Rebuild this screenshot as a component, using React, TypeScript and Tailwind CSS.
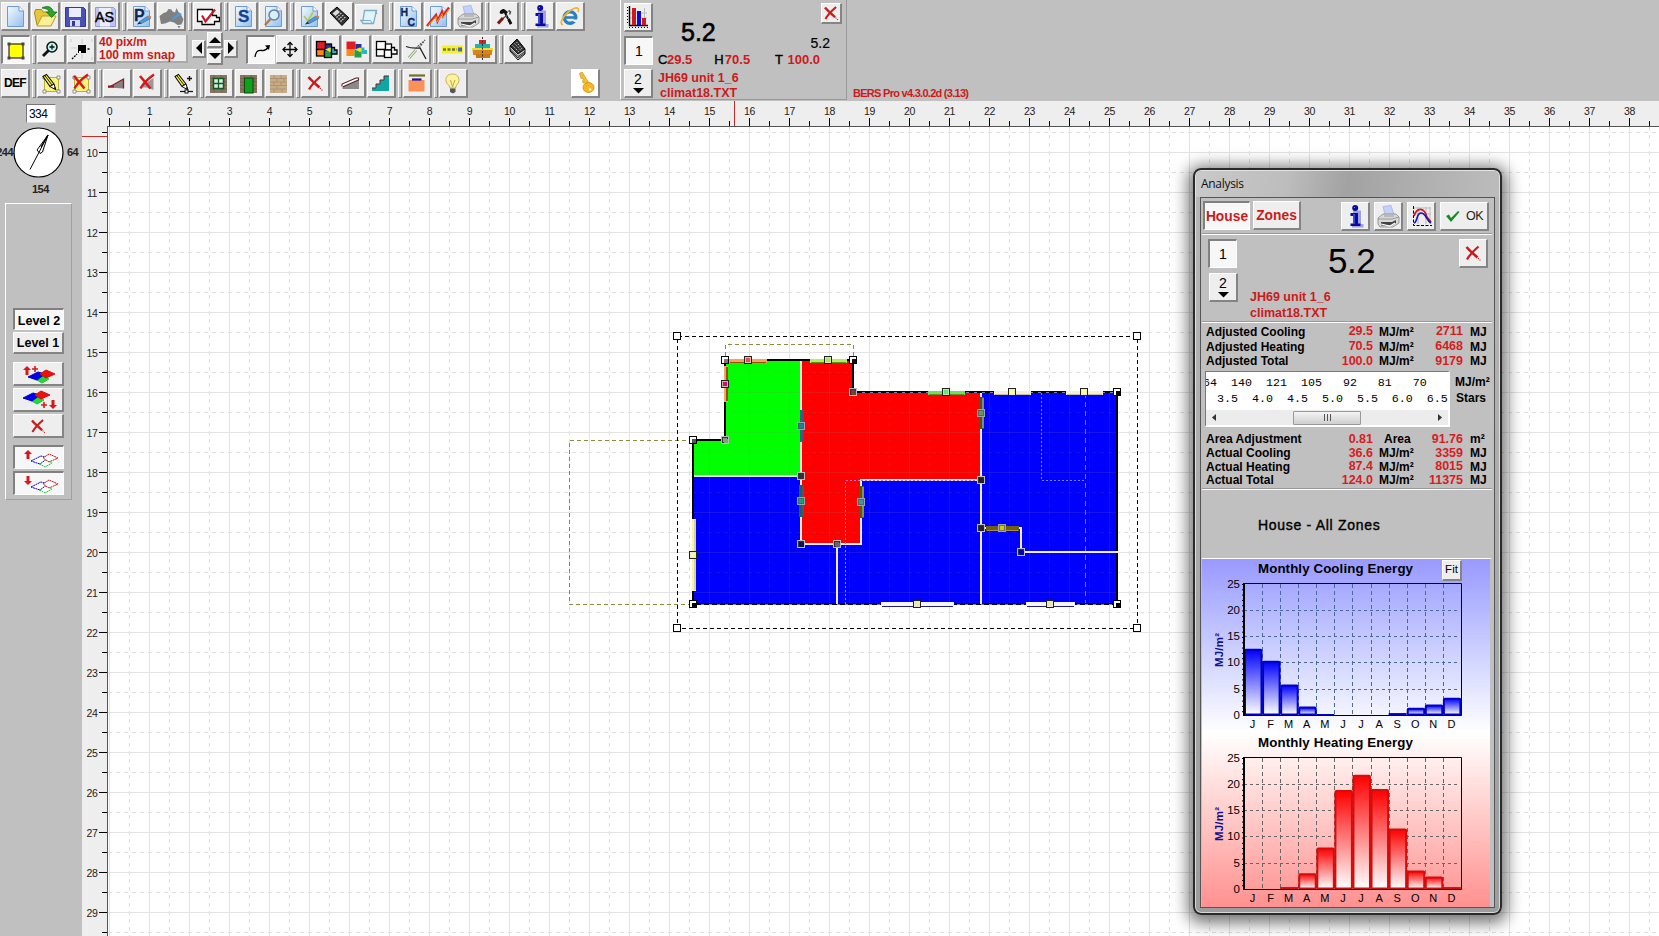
import React from "react";

type Kids = { children?: React.ReactNode };

function Btn({ children, pressed, className = "w-[29px] h-[29px]", white }: Kids & { pressed?: boolean; className?: string; white?: boolean }) {
  const look = pressed
    ? "bg-[#f7f7f7] border-t-2 border-l-2 border-r border-b border-t-[#808080] border-l-[#808080] border-r-white border-b-white"
    : "border-t border-l border-r-2 border-b-2 border-t-white border-l-white border-r-[#848484] border-b-[#848484]";
  const bg = pressed ? "" : white ? "bg-white" : "bg-[#eeeeee]";
  return <div className={`flex shrink-0 items-center justify-center overflow-hidden ${look} ${bg} ${className}`}>{children}</div>;
}

function Sep({ className = "" }: { className?: string }) {
  return (
    <div className={`flex h-[29px] w-[5px] shrink-0 justify-center ${className}`}>
      <div className="w-[4px] border-t border-r border-b border-l border-t-white border-r-[#808080] border-b-[#808080] border-l-white bg-[#c8c8c8]" />
    </div>
  );
}

function Ic({ children, size = 26 }: Kids & { size?: number }) {
  return (
    <svg width={size} height={size} viewBox="1 1 26 26" fill="none" className="shrink-0">
      {children}
    </svg>
  );
}

const Doc = () => (
  <>
    <path d="M6.500 4.500h11.500l4.500 4.500v15.500H6.500z" fill="url(#docg)" stroke="#6d9bd4" />
    <path d="M18 4.500V9h4.500" fill="#fff" stroke="#6d9bd4" />
  </>
);

const Pen = () => (
  <>
    <path d="M12 20l9-6 2.500 2.500-9 5z" fill="#4f9bd8" stroke="#376b99" strokeWidth=".7" />
    <path d="M12 20l2.500 1.500L10 22.500z" fill="#222" />
    <path d="M20.500 14.500l2.500 2 1.500-1.500-2-2z" fill="#d08050" />
  </>
);

const Glyph = ({ t, x, y, s = 15, c = "#12245c" }: { t: string; x: number; y: number; s?: number; c?: string }) => (
  <text x={x} y={y} fontSize={s} fontWeight="bold" fill={c} stroke={c} strokeWidth=".3" fontFamily="Liberation Sans, Arial, sans-serif">
    {t}
  </text>
);

const Floppy = ({ pale }: { pale?: boolean }) => (
  <>
    <path d="M4.500 5.500h18l2 2v17h-20z" fill={pale ? "#bfc4f2" : "#4b4fb8"} stroke={pale ? "#8f97dd" : "#34389a"} />
    <path d="M8 6h12v9H8z" fill="#e8eefc" />
    <path d="M9 18h10v6.500H9z" fill={pale ? "#eef" : "#d5daf5"} />
    {!pale && <path d="M11 19h3v5h-3z" fill="#34389a" />}
  </>
);

const InfoI = () => (
  <g fill="#0a0a9c">
    <path d="M12 8.500h8V22h2.500v3.500H11V22h2.500v-9.500H12z" fill="#9fa0e0" />
    <circle cx="14.200" cy="6" r="3" />
    <path d="M9.500 11h7.500v10.500h2.500V24h-10v-2.500H12v-7.500H9.500z" />
    <path d="M13 12v10M13 5.500h1" stroke="#6f86ff" />
  </g>
);

const Printer = () => (
  <>
    <path d="M9 4.500l8-1 3 9H11z" fill="#c3d2fb" stroke="#93a5e0" strokeWidth=".6" />
    <path d="M4 16l5-4h13l3 3v6l-6 4H6l-2-3z" fill="#d9d9d9" stroke="#777" strokeWidth=".7" />
    <path d="M4 17h14l7-2" stroke="#888" strokeWidth=".8" />
    <path d="M7 20h11l4-2v3l-4 2.500H7z" fill="#444" />
    <path d="M7 22l9 2 5-3" stroke="#fff" strokeWidth="1.200" />
    <path d="M10 14h10" stroke="#999" />
  </>
);

const RedX = () => (
  <>
    <path d="M7.500 8c3 3.500 6 6 11 10.500" stroke="#cc1a1a" strokeWidth="2.600" />
    <path d="M19.500 7.500C16 10.500 11 15 8 20.500" stroke="#cc1a1a" strokeWidth="2.200" />
    <path d="M19 19l2.500 2.500" stroke="#cc1a1a" strokeWidth="1.200" strokeDasharray="1.200 1" />
  </>
);

const SmallX = () => (
  <>
    <path d="M7 7l10.500 12.500" stroke="#d81818" strokeWidth="2.600" />
    <path d="M21 5.500C16 9 10.500 14 7.500 19.500" stroke="#d81818" strokeWidth="2.400" />
  </>
);

const Rooms = ({ outline, plain }: { outline?: boolean; plain?: boolean }) => {
  const s = outline ? "#000" : "none";
  const f = (c: string) => (plain ? "#fff" : c);
  return (
    <g stroke={s} strokeWidth="1.300">
      <rect x="4.500" y="6.500" width="9" height="8" fill={f("#e31b23")} />
      <rect x="13.500" y="9" width="6" height="6" fill={f("#26309a")} />
      <rect x="4.500" y="14.500" width="8" height="6.500" fill={f("#ff8a10")} />
      <rect x="12.500" y="15" width="7" height="7.500" fill={f("#25a048")} />
      {!plain && <path d="M13 14.500l5-2 5 2.500-5 2z" fill="#e9e52a" stroke="none" />}
      <path d="M19.500 12.500h3v2.500h2.500v4h-5.500z" fill={f("#2ab5c5")} />
    </g>
  );
};

const Brick = ({ x, y, w, h, c = "#857561", m = "#6a5a48" }: { x: number; y: number; w: number; h: number; c?: string; m?: string }) => (
  <>
    <rect x={x} y={y} width={w} height={h} fill={c} />
    <path
      d={`M${x} ${y + 3.500}h${w}M${x} ${y + 7}h${w}M${x} ${y + 10.500}h${w}M${x} ${y + 14}h${w}M${x + 4} ${y}v3.500M${x + 11} ${y}v3.500M${x + 7} ${y + 3.500}v3.500M${x + 14} ${y + 3.500}v3.500M${x + 4} ${y + 7}v3.500M${x + 11} ${y + 7}v3.500M${x + 7} ${y + 10.500}v3.500M${x + 4} ${y + 14}v3.500M${x + 12} ${y + 14}v3.500`}
      stroke={m}
      strokeWidth=".7"
    />
  </>
);

const YellowSel = () => (
  <>
    <rect x="7.500" y="8.500" width="14" height="14" fill="#fbf67a" stroke="#b8b040" />
    <path d="M6 7h3v3H6zM20 7h3v3h-3zM6 21h3v3H6zM20 21h3v3h-3z" fill="#fff" stroke="#777" strokeWidth=".8" />
  </>
);

const Pencil = () => (
  <>
    <path d="M6 7.500l3.500-2 7.500 9.500-4 2.500z" fill="#f4ee3a" stroke="#111" strokeWidth="1.100" />
    <path d="M7.800 6.500l7.200 9.500" stroke="#111" strokeWidth=".9" />
    <path d="M13 17.500l4-2.500 2 6z" fill="#fff" stroke="#111" strokeWidth="1" />
    <path d="M16.500 19l1.700-1 .8 3z" fill="#111" />
  </>
);

const CalcIcon = () => (
  <>
    <path d="M5 11l7-6 12 11-7 7.500z" fill="#333" stroke="#000" />
    <path d="M7.500 11.500l4.500-4 3 2.500-4.500 4z" fill="#ddd" />
    <path d="M11.500 15.500l5-4.500M13.500 17.500l5-4.500M15.500 19.500l5-4.500" stroke="#e5e5e5" strokeWidth="1.200" strokeDasharray="1.500 1" />
  </>
);

const Globe = () => (
  <>
    <circle cx="14" cy="15.500" r="5.800" stroke="#2b7fc4" strokeWidth="3.400" />
    <path d="M8 15.500h12" stroke="#2b7fc4" strokeWidth="2.600" />
    <path d="M16 17.500h7v2.500h-5z" fill="#eee" />
    <path d="M7 22.500C3.500 23 5.500 16 11 11S22 4.500 22.500 7.500c.2 1.500-.5 2.500-.5 2.500" stroke="#f0b428" strokeWidth="1.700" />
  </>
);

function Toolbar() {
  return (
    <div className="flex h-[101px] w-full shrink-0 bg-[#c0c0c0]">
      <div className="flex w-[620px] shrink-0 flex-col gap-[4px] pt-[2px] pl-px">
        <div className="flex gap-px">
          <Btn><Ic><Doc /></Ic></Btn>
          <Btn>
            <Ic>
              <path d="M3.500 11l1-3.500h6l1.500 2.500h8v13H6z" fill="#e8c63c" stroke="#a88a18" />
              <path d="M6 24l5-10h14l-5 10z" fill="#fbf09a" stroke="#b99b24" />
              <path d="M11 6c6-3 10-1 11.500 4H26l-5.500 5.500L15.500 10h3C17 7 15 6.500 11 6z" fill="#2da52d" stroke="#137013" strokeWidth=".8" />
            </Ic>
          </Btn>
          <Btn><Ic><Floppy /></Ic></Btn>
          <Btn>
            <Ic>
              <Floppy pale />
              <text x="4" y="20" fontSize="15" textLength="19" lengthAdjust="spacingAndGlyphs" fill="#000" stroke="#000" strokeWidth=".4" fontFamily="Liberation Sans, sans-serif">AS</text>
            </Ic>
          </Btn>
          <Sep />
          <Btn><Ic><Doc /><Glyph t="P" x={7} y={19} s={16} /><Pen /></Ic></Btn>
          <Btn>
            <Ic>
              <path d="M2.500 14l4-3 3-1 2-3 3 .5 1 2 2.500 1 1.500-4.500 2 4 3 3.500 2 4-2 5-4 .5-3.500-2.500-4-1-5 2-4 .5z" fill="#808080" />
              <path d="M20.500 24h3l-1.500 2.500z" fill="#808080" />
              <path d="M14 17.500l8-7 3 1.500-9 6z" fill="#4f9bd8" />
            </Ic>
          </Btn>
          <Sep />
          <Btn>
            <Ic>
              <path d="M4.500 7.500h15v6h4v2h3v4h-5v3H9v-3H4.500z" fill="#fff" stroke="#000" strokeWidth="1.300" />
              <path d="M9 13.500l3.500 6L22 7.500" stroke="#cc1a2a" strokeWidth="2.200" />
            </Ic>
          </Btn>
          <Sep />
          <Btn><Ic><Doc /><Glyph t="S" x={9} y={20} s={17} c="#15408c" /></Ic></Btn>
          <Btn>
            <Ic>
              <Doc />
              <circle cx="15" cy="13" r="5" fill="#d6f0fb" stroke="#6b7f99" strokeWidth="1.500" />
              <path d="M11.500 17L6 23" stroke="#b07a50" strokeWidth="2.500" />
            </Ic>
          </Btn>
          <Sep />
          <Btn><Ic><Doc /><path d="M9 14l4 5 5-9" stroke="#b8c850" strokeWidth="1.800" /><Pen /></Ic></Btn>
          <Btn><Ic><CalcIcon /></Ic></Btn>
          <Btn className="mt-[2px] h-[27px] w-[29px]">
            <Ic>
              <path d="M9.500 7.500h12l-3 13H8l-2-3h2z" fill="#e3f3fb" stroke="#7eaccb" strokeWidth="1.300" />
              <path d="M5.500 17.500h10l2 3M20 7.500l2 3h-2" stroke="#7eaccb" />
            </Ic>
          </Btn>
          <Sep className="ml-[3px]" />
          <Btn><Ic><Doc /><Glyph t="H" x={6.5} y={13.500} s={10.500} /><Glyph t="C" x={13.5} y={24} s={10.500} /></Ic></Btn>
          <Btn>
            <Ic>
              <Doc />
              <path d="M3 24l9-11 1.500 6L18 10l1 4 6-8.500" stroke="#e02020" strokeWidth="2.400" />
              <path d="M4 23.500l8-9 1.500 5.500L18 11.500l1 4L25 7" stroke="#f0a020" strokeWidth=".9" />
            </Ic>
          </Btn>
          <Btn><Ic><Printer /></Ic></Btn>
          <Sep />
          <Btn>
            <Ic>
              <path d="M10 11.500c-1-2 1-4.500 4-4.500l4 3-2 2.500-2-1.500-2 1z" fill="#111" />
              <path d="M15 11l6 11" stroke="#111" strokeWidth="2" strokeDasharray="3 .6" />
              <path d="M18.500 8.500l2 1.500-1 2.500" stroke="#555" strokeWidth="1.600" />
              <path d="M17.500 13l-6 4.500" stroke="#444" strokeWidth="1.300" />
              <path d="M13 16l-5 5.500" stroke="#7a1515" strokeWidth="3" />
              <path d="M18.500 17l2.500 5" stroke="#111" strokeWidth="2.800" />
            </Ic>
          </Btn>
          <Sep />
          <Btn><Ic><InfoI /></Ic></Btn>
          <Btn><Ic><Globe /></Ic></Btn>
        </div>

        <div className="flex items-start gap-px">
          <Btn pressed>
            <Ic>
              <rect x="7" y="8" width="14" height="14" fill="#ffff00" stroke="#000" />
              <path d="M5.500 6.500h3v3h-3zM19.500 6.500h3v3h-3zM5.500 20.500h3v3h-3zM19.500 20.500h3v3h-3z" fill="#444" />
            </Ic>
          </Btn>
          <Sep />
          <Btn>
            <Ic>
              <circle cx="15" cy="12" r="5" fill="#bff5f5" stroke="#111" strokeWidth="1.500" />
              <path d="M12.500 12h5M15 9.500v5" stroke="#111" strokeWidth="1.300" />
              <path d="M11.500 15.500L6 21" stroke="#111" strokeWidth="2.800" />
            </Ic>
          </Btn>
          <Btn>
            <Ic>
              <rect x="11" y="10" width="8" height="8" fill="#000" />
              <path d="M20.500 14h3M5 24l5-5" stroke="#000" strokeWidth="1.300" strokeDasharray="2 1" />
              <path d="M4 13h6M15 4v5M15 19v5M4 4v3M25 4v3M25 22v3" stroke="#ccc" />
              <path d="M12 16h2v2h-2z" fill="#fff" />
            </Ic>
          </Btn>
          <div className="flex h-[28px] w-[91px] shrink-0 flex-col justify-center border-r-2 border-b-2 border-[#aaa] bg-[#eeeeee] pt-px pl-[2px] text-[12px] leading-[13px] font-bold text-[#cc1a1a]">
            <span>40 pix/m</span>
            <span className="whitespace-nowrap">100 mm snap</span>
          </div>
          <div className="-mt-[3px] ml-[3px] flex h-[33px] items-center gap-px">
            <Btn className="h-[18px] w-[14px]"><svg width="8" height="12"><path d="M7 0v12L1 6z" fill="#000" /></svg></Btn>
            <div className="flex flex-col gap-px">
              <Btn className="h-[16px] w-[16px]"><svg width="12" height="7"><path d="M0 7h12L6 1z" fill="#000" /></svg></Btn>
              <Btn className="h-[16px] w-[16px]"><svg width="12" height="7"><path d="M0 0h12L6 6z" fill="#000" /></svg></Btn>
            </div>
            <Btn className="h-[18px] w-[14px]"><svg width="8" height="12"><path d="M1 0v12l6-6z" fill="#000" /></svg></Btn>
          </div>
          <Btn pressed className="ml-[7px] h-[29px] w-[29px]">
            <Ic>
              <path d="M8 21c1-7 4-7 7-6.500S20 13 21.500 11" stroke="#000" strokeWidth="1.300" />
              <path d="M18 9.500l5-.5-1 5z" fill="#000" />
            </Ic>
          </Btn>
          <Btn>
            <Ic>
              <path d="M14 8v13M7.500 14.500h13" stroke="#000" strokeWidth="1.300" />
              <path d="M11.500 10L14 7.500l2.500 2.500M11.500 19L14 21.500l2.500-2.500M9.500 12L7 14.500 9.500 17M18.500 12l2.500 2.500-2.500 2.500" stroke="#000" strokeWidth="1.300" />
            </Ic>
          </Btn>
          <Sep />
          <Btn><Ic><Rooms outline /></Ic></Btn>
          <Btn><Ic><Rooms /></Ic></Btn>
          <Btn><Ic><Rooms outline plain /></Ic></Btn>
          <Btn>
            <Ic>
              <path d="M4 11.500c5 2 8 2 14 1.500l6 11" stroke="#222" strokeWidth="1.300" />
              <path d="M17 13l6-8-9 8" stroke="#555" strokeWidth="1.200" strokeDasharray="2 1" />
              <path d="M14 15l-7 8" stroke="#9bb37c" strokeWidth="3" />
              <path d="M14 15l-7 8" stroke="#fff" strokeWidth="1" />
            </Ic>
          </Btn>
          <Sep />
          <Btn>
            <Ic>
              <rect x="4" y="10.500" width="21" height="8" fill="#f4f02c" />
              <path d="M5 14.500h14" stroke="#77773a" strokeWidth="2.400" strokeDasharray="3 1.500" />
              <rect x="20" y="12.500" width="4" height="4" fill="#4e62b8" />
            </Ic>
          </Btn>
          <Btn>
            <Ic>
              <rect x="11" y="5" width="7" height="4" fill="#d22" />
              <rect x="7" y="9" width="15" height="6" fill="#1fb3b3" />
              <rect x="4" y="13" width="21" height="4" fill="#e9dc3c" />
              <rect x="5" y="15" width="19" height="5" fill="#d8831c" />
              <rect x="8" y="19" width="14" height="4" fill="#c87818" />
              <path d="M14.500 2v24" stroke="#333" strokeDasharray="2 1.500" />
            </Ic>
          </Btn>
          <Sep />
          <Btn>
            <Ic>
              <path d="M13 4l8 10-7 5-8-8z" fill="#333" stroke="#000" />
              <path d="M6 11v5l8 9 7-6v-5l-7 5z" fill="#ccc" stroke="#111" />
              <path d="M6 13.500l8 8 7-5M6 15l8 8 7-5" stroke="#111" strokeWidth=".8" />
              <path d="M8.500 10.500l7 7M10.500 8.500l7 7.500M12.500 7l6 7.500" stroke="#ccc" strokeWidth=".9" strokeDasharray="1.500 1" />
            </Ic>
          </Btn>
        </div>

        <div className="flex gap-px">
          <Btn><span className="text-[12px] font-bold tracking-[-0.600px]">DEF</span></Btn>
          <Sep />
          <Btn><Ic><YellowSel /><Pencil /></Ic></Btn>
          <Btn><Ic><YellowSel /><SmallX /></Ic></Btn>
          <Sep />
          <Btn><Ic><path d="M5.500 18.500L20.500 10v9.500" fill="#8a8080" stroke="#8d1a22" strokeWidth="1.300" /><path d="M5 17.500h6" stroke="#8d1a22" strokeWidth="2" /></Ic></Btn>
          <Btn><Ic><path d="M6 18.500L20.500 9v12l-7-2.500z" fill="#999" /><SmallX /></Ic></Btn>
          <Sep />
          <Btn>
            <Ic>
              <Pencil />
              <path d="M18 9.500h5M20.500 7v5" stroke="#111" strokeWidth="1.300" />
              <path d="M11 22.500h13" stroke="#111" strokeWidth="1.200" />
              <rect x="16" y="21" width="3" height="3" fill="#fff" stroke="#111" />
            </Ic>
          </Btn>
          <Sep />
          <Btn><Ic><Brick x={5} y={6} w={17} h={18} /><rect x="8.500" y="9.500" width="10" height="10" fill="#d8efe0" stroke="#0f5a24" strokeWidth="1.500" /><path d="M13.500 9v11M8 14.500h11" stroke="#0f5a24" strokeWidth="1.300" /></Ic></Btn>
          <Btn><Ic><Brick x={5} y={6} w={17} h={18} /><rect x="9.500" y="9" width="8.500" height="15" fill="#0fa01c" stroke="#064d0a" /></Ic></Btn>
          <Btn><Ic><Brick x={5} y={6} w={17} h={18} c="#c8ac88" m="#a58a6b" /></Ic></Btn>
          <Sep />
          <Btn><Ic><RedX /></Ic></Btn>
          <Sep />
          <Btn><Ic><path d="M5.500 18L22 10.500V20H5.500z" fill="#8a8a8a" /><path d="M5 17.500v-2.500L19 9h2.500v2L6 17.800" fill="#fff" stroke="#5a1c22" strokeWidth="1.100" /></Ic></Btn>
          <Btn><Ic><path d="M5 22v-3h4v-4h4v-4h4V7h5v15z" fill="#11a6a6" /><path d="M5 19h4v-4h4v-4h4V7h5" stroke="#6b2020" /></Ic></Btn>
          <Sep />
          <Btn><Ic><path d="M6 6.500h16" stroke="#77701f" strokeWidth="2.200" /><rect x="5.500" y="11" width="16" height="11.500" fill="#fa9257" /><path d="M9 10.500h9.500" stroke="#1414b4" strokeWidth="2.200" /></Ic></Btn>
          <Sep />
          <Btn><Ic><path d="M13.500 5c-5 0-7 3.500-6.500 7s4 4 4 7h5.500c0-3 3.500-4 3.500-7.500S18 5 13.500 5z" fill="#fbf3a0" stroke="#c4b44c" /><path d="M11.500 11l2 7 2.500-7" stroke="#c9a93a" /><path d="M11 19.500h5.500v3.500l-2.500 1.500-3-1.500z" fill="#555" /></Ic></Btn>
          <Btn white className="ml-[102px] h-[29px] w-[29px]">
            <Ic>
              <path d="M8.500 4.500L11 3l7 11-3 2-1.500-2.500-1.500.5-.5-2 1-1-1.200-2-1.300.5-.5-2z" fill="#f3c02c" stroke="#c99212" strokeWidth=".7" />
              <ellipse cx="17.500" cy="18.500" rx="5.500" ry="5" fill="#f6b620" stroke="#c98a10" strokeWidth=".8" />
              <circle cx="19" cy="20.500" r="1.200" fill="#fff" />
            </Ic>
          </Btn>
        </div>
      </div>

      <div className="mb-px flex w-[227px] shrink-0 border-r border-b border-l border-r-[#9a9a9a] border-b-[#9a9a9a] border-l-white pt-[3px] pl-[3px]">
        <div className="flex w-[29px] flex-col gap-[4px]">
          <Btn>
            <Ic>
              <path d="M10 5v17M20.500 5v17M5 10h18M5 15h18" stroke="#bbb" />
              <path d="M5.500 3v19.500H24" stroke="#000" strokeWidth="1.400" />
              <path d="M3.500 4v18M5 24.500h19" stroke="#000" strokeDasharray="1 2" />
              <rect x="8" y="5" width="4" height="17" fill="#cc1a1a" />
              <rect x="13" y="8" width="4" height="14" fill="#0a0add" />
              <rect x="18" y="15" width="4" height="7" fill="#cc1a1a" />
            </Ic>
          </Btn>
          <Btn pressed><span className="pt-px text-[14px]">1</span></Btn>
          <TwoButton />
        </div>
        <div className="ml-[5px] flex w-[162px] flex-col whitespace-nowrap">
          <div className="mt-[15px] flex h-[29px] items-center pl-[23px] text-[25px] [-webkit-text-stroke:0.6px_black]">5.2</div>
          <div className="mt-[4px] flex h-[17px] items-center text-[13px]">
            <span className="w-[9px] [-webkit-text-stroke:0.3px_black]">C</span><b className="w-[49px] text-[#cc1a1a]">29.5</b>
            <span className="w-[11px] [-webkit-text-stroke:0.4px_black]">H</span><b className="w-[52px] text-[#cc1a1a]">70.5</b>
            <span className="w-[13px] [-webkit-text-stroke:0.4px_black]">T</span><b className="text-[#cc1a1a]">100.0</b>
          </div>
          <b className="mt-[3px] h-[15px] text-[12.500px] leading-[15px] text-[#cc1a1a]">JH69 unit 1_6</b>
          <b className="h-[15px] pl-[2px] text-[12.500px] leading-[15px] text-[#cc1a1a]">climat18.TXT</b>
        </div>
        <div className="flex w-[22px] flex-col items-end">
          <Btn className="h-[21px] w-[21px]"><Ic size={24}><RedX /></Ic></Btn>
          <span className="mt-[9px] mr-[12px] text-[14px] [-webkit-text-stroke:0.2px_black]">5.2</span>
        </div>
      </div>
      <div className="flex items-end pb-[1px] pl-[6px] text-[11px] leading-[14px] font-bold tracking-[-0.720px] text-[#cc1a1a]">BERS Pro v4.3.0.2d (3.13)</div>
    </div>
  );
}

function TwoButton() {
  return (
    <Btn>
      <div className="flex flex-col items-center">
        <span className="text-[14px] leading-[15px]">2</span>
        <svg width="11" height="7"><path d="M0 1h11L5.500 6.500z" fill="#000" /></svg>
      </div>
    </Btn>
  );
}

function Layers({ dir, hollow }: { dir: "up" | "down"; hollow?: boolean }) {
  const up = dir === "up";
  const oy = hollow ? 2 : up ? 2 : -3;
  const ox = hollow ? 2 : up ? 0 : -5;
  const f = (c: string) => (hollow ? "#fff" : c);
  const ax = hollow || up ? 12 : 38;
  const ay = hollow ? 3 : up ? 3 : 11;
  return (
    <svg width="46" height="21" viewBox="0 0 46 21">
      <g transform={`translate(${ox} ${oy})`} strokeWidth="1" strokeDasharray={hollow ? "2 .6" : undefined}>
        <path d="M20 14l7-4 7 4-7 4z" fill={f("#20d838")} stroke="#20c838" />
        <path d="M13 12l10-5 7 2-8 6z" fill={f("#0000ee")} stroke="#0000d0" />
        <path d="M25 9l6-4 9 4-9 4z" fill={f("#ee1010")} stroke="#d01010" />
      </g>
      <path d={up ? `M${ax - 4} ${ay + 4}l4-4 4 4h-2.500v5h-3v-5z` : `M${ax - 4} ${ay + 5}l4 4 4-4h-2.500v-5h-3v5z`} fill="#d81818" />
      {!hollow && <path d={up ? "M17 6h6M20 3v6" : "M26 16h6M29 13v6"} stroke="#d81818" strokeWidth="1.600" />}
    </svg>
  );
}

function Sidebar() {
  return (
    <div className="flex w-[82px] shrink-0 flex-col overflow-hidden bg-[#c0c0c0] pt-[3px]">
      <div className="ml-[26px] flex h-[19px] w-[30px] items-center border border-t-[#777] border-r-[#ddd] border-b-[#ddd] border-l-[#777] bg-white pl-[2px] text-[12px] tracking-[-0.600px]">334</div>
      <div className="mt-[4px] flex h-[51px] items-center text-[11px] font-bold tracking-[-0.500px] whitespace-nowrap text-[#222]">
        <span className="-ml-[5px] w-[18px] text-right">244</span>
        <svg width="51" height="51" viewBox="0 0 51 51" className="shrink-0">
          <circle cx="25.500" cy="25.500" r="24.500" fill="#fff" stroke="#000" strokeWidth="1.200" />
          <path d="M17 42.500L35 8" stroke="#000" />
          <path d="M35 8l-5.500 17-2.500 1.500-3-3.500z" fill="none" stroke="#000" />
          <path d="M35 8l-7 12" stroke="#000" strokeWidth="1.200" />
        </svg>
        <span className="ml-[3px]">64</span>
      </div>
      <div className="mt-[4px] h-[14px] pl-[32px] text-[11px] leading-[14px] font-bold tracking-[-0.500px] text-[#222]">154</div>
      <div className="mt-[7px] ml-[5px] flex h-[297px] w-[67px] flex-col items-center border-t border-r border-b border-l border-t-white border-r-[#a0a0a0] border-b-[#a0a0a0] border-l-white pt-[104px]">
        <Btn pressed className="h-[22px] w-[51px]"><b className="pt-[3px] text-[12.500px] whitespace-nowrap">Level 2</b></Btn>
        <Btn className="mt-[2px] h-[22px] w-[51px]"><b className="pt-[2px] text-[12.500px] whitespace-nowrap">Level 1</b></Btn>
        <Btn className="mt-[8px] h-[24px] w-[51px]"><Layers dir="up" /></Btn>
        <Btn className="mt-[2px] h-[24px] w-[51px]"><Layers dir="down" /></Btn>
        <Btn className="mt-[2px] h-[24px] w-[51px]"><Ic size={24}><RedX /></Ic></Btn>
        <Btn pressed className="mt-[7px] h-[24px] w-[51px]"><Layers dir="up" hollow /></Btn>
        <Btn pressed className="mt-[2px] h-[24px] w-[51px]"><Layers dir="down" hollow /></Btn>
      </div>
    </div>
  );
}

const range = (n: number) => Array.from({ length: n }, (_, i) => i);

function TopRuler() {
  return (
    <svg width="1577" height="26" viewBox="82 101 1577 26" className="block shrink-0 bg-[#eeeeee]" shapeRendering="crispEdges">
      {range(78).map((i) => (
        <path key={i} d={`M${109.500 + i * 20} ${i % 2 ? 121 : 118}V126`} stroke="#000" />
      ))}
      {range(39).map((m) => (
        <text key={m} x={109.500 + m * 40} y="115" fontSize="10.500" textAnchor="middle" letterSpacing="-.4" fill="#222">{m}</text>
      ))}
      <path d="M107 126.500H1659" stroke="#555" />
      <path d="M734.500 101V126" stroke="#cc2a2a" />
    </svg>
  );
}

function LeftRuler() {
  return (
    <svg width="26" height="809" viewBox="82 127 26 809" className="block shrink-0 bg-[#eeeeee]" shapeRendering="crispEdges">
      {range(41).map((i) => (
        <path key={i} d={`M${i % 2 ? 99 : 102} ${132.500 + i * 20}H108`} stroke="#000" />
      ))}
      {range(20).map((m) => (
        <text key={m} x="92" y={157 + m * 40} fontSize="10.500" textAnchor="middle" letterSpacing="-.4" fill="#222">{m + 10}</text>
      ))}
      <path d="M107.500 127V936" stroke="#555" />
      <path d="M82 136.500H107" stroke="#cc2a2a" />
    </svg>
  );
}

function Grid({ major, minor }: { major: string; minor: string }) {
  return (
    <>
      {range(39).map((i) => (
        <React.Fragment key={i}>
          <path d={`M${109.500 + i * 40} 127V936`} stroke={major} />
          <path d={`M${129.500 + i * 40} 127V936`} stroke={minor} strokeDasharray="4 4" />
        </React.Fragment>
      ))}
      {range(21).map((i) => (
        <React.Fragment key={i}>
          <path d={`M108 ${152.500 + i * 40}H1659`} stroke={major} />
          <path d={`M108 ${132.500 + i * 40}H1659`} stroke={minor} strokeDasharray="4 4" />
        </React.Fragment>
      ))}
    </>
  );
}

type Opening = { x: number; y: number; w: number; h: number; c: string; d: string; hx: number; hy: number; hc: string; door?: boolean };

const openings: Opening[] = [
  { x: 729, y: 359, w: 38, h: 4, c: "#f2a45c", d: "#a04c10", hx: 748, hy: 360, hc: "#e05050" },
  { x: 810, y: 359, w: 37, h: 4, c: "#b4ee60", d: "#5c9c08", hx: 828, hy: 360, hc: "#a8e860" },
  { x: 928, y: 391, w: 37, h: 4, c: "#6ce060", d: "#6b8a20", hx: 946, hy: 392, hc: "#60e878" },
  { x: 994, y: 391, w: 37, h: 4, c: "#f4f0d8", d: "#c8bca0", hx: 1012, hy: 392, hc: "#fff8a0" },
  { x: 1066, y: 391, w: 37, h: 4, c: "#f4f0d8", d: "#c8bca0", hx: 1084, hy: 392, hc: "#fff8a0" },
  { x: 881, y: 602, w: 73, h: 5, c: "#f4f4ff", d: "#20207c", hx: 917, hy: 604, hc: "#e8e8b0" },
  { x: 1026, y: 602, w: 49, h: 5, c: "#f4f4ff", d: "#20207c", hx: 1050, hy: 604, hc: "#e8e8b0" },
  { x: 724, y: 366, w: 4, h: 36, c: "#f0a868", d: "#a04818", hx: 725, hy: 384, hc: "#c01868" },
  { x: 692, y: 519, w: 4, h: 72, c: "#f6f2b0", d: "#d9d29a", hx: 693, hy: 555, hc: "#f8f4a8" },
  { x: 800, y: 410, w: 4, h: 32, c: "#2c6a80", d: "#50507c", hx: 801, hy: 426, hc: "#208098", door: true },
  { x: 799, y: 485, w: 5, h: 32, c: "#246444", d: "#405c70", hx: 801, hy: 501, hc: "#18a078", door: true },
  { x: 859, y: 486, w: 5, h: 32, c: "#2f6a20", d: "#a08838", hx: 861, hy: 502, hc: "#4c90a0", door: true },
  { x: 979, y: 397, w: 5, h: 32, c: "#2c6428", d: "#988070", hx: 981, hy: 413, hc: "#6c9460", door: true },
  { x: 986, y: 526, w: 33, h: 5, c: "#706008", d: "#a88868", hx: 1002, hy: 528, hc: "#d8c800", door: true },
];

type Corner = { x: number; y: number; core: string; inside?: boolean };

const corners: Corner[] = [
  { x: 725, y: 360, core: "#777" },
  { x: 853, y: 360, core: "#111" },
  { x: 853, y: 392, core: "#704040", inside: true },
  { x: 693, y: 440, core: "#555" },
  { x: 725, y: 440, core: "#80a080", inside: true },
  { x: 801, y: 476, core: "#333", inside: true },
  { x: 801, y: 544, core: "#101050", inside: true },
  { x: 837, y: 544, core: "#666", inside: true },
  { x: 981, y: 480, core: "#222", inside: true },
  { x: 981, y: 528, core: "#222", inside: true },
  { x: 1021, y: 552, core: "#0000c0", inside: true },
  { x: 1117, y: 392, core: "#000" },
  { x: 1117, y: 604, core: "#000" },
  { x: 693, y: 604, core: "#000" },
];

function Plan() {
  return (
    <svg width="1551" height="809" viewBox="108 127 1551 809" className="block shrink-0 bg-white" shapeRendering="crispEdges" fill="none">
      <defs>
        <clipPath id="house">
          <path d="M725 360H853V392H1117V604H693V440H725z" />
        </clipPath>
      </defs>
      <Grid major="#e3e3e3" minor="#e0e0e0" />
      <path d="M725 360H853V392H1117V604H693V440H725z" fill="#0000ff" />
      <path d="M725 360H801V476H693V440H725z" fill="#00ff00" />
      <path d="M801 360H853V392H981V480H861V544H801z" fill="#ff0000" />
      <g clipPath="url(#house)">
        <Grid major="rgba(128,128,128,.16)" minor="rgba(128,128,128,.13)" />
      </g>
      <path d="M725 360H853V392H1117V604H693V440H725z" stroke="#000" strokeWidth="2" />
      <path d="M801 361V544H861V480H981M981 393V604M694 476H801M837 544V604M981 528H1021V552H1118" stroke="#f0ece8" strokeWidth="2" />
      <path d="M845.500 604V480.500H861" stroke="#d070d0" strokeDasharray="2 2" />
      <path d="M861 480.500H981" stroke="#8888cc" strokeDasharray="2 2" />
      <path d="M1041.500 393V480.500H1085.500" stroke="#8080ff" strokeDasharray="2 2" />
      <path d="M1085.500 393V603" stroke="#7070ee" strokeDasharray="5 4" />
      <path d="M693 604.500H1117M854 392.500H1117" stroke="#8080b8" strokeDasharray="3 5" />
      <path d="M693 440.500H569.500V604.500H693M725.500 356V344.500H853.500V356" stroke="#8a8a40" strokeDasharray="4 3" />
      <path d="M677.500 336.500H1137.500V628.500H677.500z" stroke="#000" strokeDasharray="4 3" />
      {openings.map((o, i) => {
        const vertical = o.h > o.w;
        return (
          <g key={i}>
            <rect x={o.x} y={o.y} width={o.w} height={o.h} rx="1" fill={o.c} />
            <rect x={vertical ? o.x + o.w - 2 : o.x + 1} y={vertical ? o.y + 1 : o.y + o.h - 1} width={vertical ? 2 : o.w - 2} height={vertical ? o.h - 2 : 1} fill={o.d} />
            <rect x={o.hx - 3.500} y={o.hy - 3.500} width="7" height="7" fill={o.hc} stroke={o.door ? "#9aa4b0" : "#222"} />
            <rect x={o.hx - 2.500} y={o.hy - 2.500} width="5" height="5" stroke={o.door ? "#4a5560" : "#e8e8d8"} strokeOpacity=".7" />
          </g>
        );
      })}
      {corners.map((p) => (
        <g key={`${p.x}-${p.y}`}>
          <rect x={p.x - 3.500} y={p.y - 3.500} width="7" height="7" fill="#fff" stroke={p.inside ? "#bbb" : "#000"} />
          <rect x={p.x - 2.500} y={p.y - 2.500} width="5" height="5" fill={p.inside ? p.core : "#fff"} stroke={p.inside ? "#333" : "#fff"} />
          <rect x={p.x - 1} y={p.y - 1} width="4" height="4" fill={p.core} />
        </g>
      ))}
      {[[677, 336], [1137, 336], [677, 628], [1137, 628]].map(([x, y]) => (
        <rect key={`${x}-${y}`} x={x - 3.500} y={y - 3.500} width="7" height="7" fill="#fff" stroke="#000" />
      ))}
    </svg>
  );
}

function DataRow({ label, a, unit, b, unit2, h }: { label: string; a: string; unit: string; b: string; unit2: string; h: string }) {
  return (
    <div className={`flex shrink-0 items-center pl-[4px] text-[12px] font-bold whitespace-nowrap ${h}`}>
      <span className="w-[100px]">{label}</span>
      <span className="w-[67px] text-right text-[12.500px] text-[#d81c24]">{a}</span>
      <span className={unit === "Area" ? "w-[50px] pl-[11px]" : "w-[50px] pl-[6px]"}>{unit}</span>
      <span className="w-[40px] text-right text-[12.500px] text-[#d81c24]">{b}</span>
      <span className="pl-[7px]">{unit2}</span>
    </div>
  );
}

const Rule = () => <div className="h-[2px] w-[290px] shrink-0 border-t border-b border-t-[#999] border-b-white" />;

function Chart({ title, values, tone, fit }: { title: string; values: number[]; tone: "blue" | "red"; fit?: boolean }) {
  const blue = tone === "blue";
  const line = blue ? "#0000c8" : "#d40c0c";
  const grad = blue ? "url(#bluebar)" : "url(#redbar)";
  const gridc = blue ? "#4a6a9c" : "#666";
  const top = 24.500;
  const bottom = 156;
  const k = (bottom - top) / 25;
  const cw = 18.080;
  return (
    <div className={`relative h-[174px] w-[288px] shrink-0 ${blue ? "bg-gradient-to-b from-[#9999ff] to-white" : "bg-gradient-to-b from-white to-[#ff9090]"}`}>
      <svg width="288" height="174" viewBox="0 0 288 174" className="block" fontFamily="Liberation Sans, Arial, sans-serif">
        <defs>
          <linearGradient id={blue ? "bluebar" : "redbar"} x1="0" y1="0" x2="0" y2="1">
            <stop offset="0" stopColor={blue ? "#0000ff" : "#ff0000"} />
            <stop offset="1" stopColor="#ffffff" />
          </linearGradient>
        </defs>
        <text x="56" y="14" fontSize="13.300" fontWeight="bold" textLength="155">{title}</text>
        {[5, 10, 15, 20].map((v) => (
          <path key={v} d={`M42 ${Math.round(bottom - v * k) + 0.500}H258`} stroke={gridc} strokeDasharray="3 3" />
        ))}
        {range(11).map((i) => (
          <path key={i} d={`M${Math.round(42 + (i + 1) * cw) + 0.500} 25V156`} stroke={gridc} strokeDasharray="4 3" />
        ))}
        {values.map((v, i) =>
          v > 0 ? (
            v > 0.500 ? (
              <rect key={i} x={43 + i * cw} y={bottom - v * k + 1} width="16.500" height={v * k - 1.500} rx="1" fill={grad} stroke={line} strokeWidth="2" />
            ) : (
              <path key={i} d={`M${42 + i * cw} ${bottom - v * k * 0.600}h18`} stroke={line} strokeWidth={v > 0.200 ? 2 : 1} />
            )
          ) : null,
        )}
        <path d="M42 24.500H259.500V156.500H42" fill="none" stroke="#000" />
        <path d="M42 24V157" stroke="#000" strokeWidth="2" />
        <path d="M40.500 25V156" stroke="#000" strokeDasharray="1 4.300" />
        {[0, 5, 10, 15, 20, 25].map((v) => (
          <text key={v} x="38" y={bottom - v * k + 4} fontSize="11.500" textAnchor="end">{v}</text>
        ))}
        {"JFMAMJJASOND".split("").map((m, i) => (
          <text key={i} x={50.500 + i * cw} y="169" fontSize="11" textAnchor="middle">{m}</text>
        ))}
        <text transform="translate(21 108) rotate(-90)" fontSize="11.500" fontWeight="bold" fill="#12128c" textLength="34">MJ/m²</text>
      </svg>
      {fit && (
        <div className="absolute top-[1px] left-[240px]">
          <Btn className="h-[21px] w-[20px]"><span className="text-[11.500px]">Fit</span></Btn>
        </div>
      )}
    </div>
  );
}

function Analysis() {
  return (
    <div className="absolute top-[168px] left-[1193px] flex h-[747px] w-[309px] flex-col rounded-[8px] border-2 border-[#2a2a2a] bg-gradient-to-b from-[#b8b8b8] to-[#9b9d9f] px-[5px] pb-[5px] shadow-[0_3px_16px_5px_rgba(0,0,0,0.55)] ring-1 ring-white/60 ring-inset">
      <div className="-mx-[4px] mt-px flex h-[26px] shrink-0 items-start rounded-t-[6px] bg-[linear-gradient(100deg,#c9c9c9_0%,#bdbdbd_30%,#a2a2a2_50%,#b0b0b0_75%,#bcbcbc_100%)] pt-[6px] pl-[5px] leading-none text-[#111]">
        <span className="font-['Open_Sans',sans-serif] text-[12px] leading-[13px] tracking-[-0.300px]">Analysis</span>
      </div>
      <div className="flex flex-1 flex-col overflow-hidden border border-[#555] bg-[#c0c0c0] pl-px">
        <div className="flex h-[35px] w-[291px] shrink-0 items-start pt-[3px] pl-px text-[13.500px] font-bold text-[#cc1a1a]">
          <Btn pressed className="h-[29px] w-[47px]"><span className="pt-[3px] text-[13.800px]">House</span></Btn>
          <Btn className="ml-[3px] h-[29px] w-[48px]"><span className="pt-[2px] text-[13.800px]">Zones</span></Btn>
          <Btn className="mt-px ml-[40px] h-[29px] w-[29px]"><Ic><InfoI /></Ic></Btn>
          <Btn className="mt-px ml-[4px] h-[29px] w-[29px]"><Ic><Printer /></Ic></Btn>
          <Btn className="mt-px ml-[4px] h-[29px] w-[29px]">
            <Ic>
              <path d="M11 5v17M19 5v17M23 5v17M6 6h18M6 12h18" stroke="#bbb" />
              <path d="M6.500 4v19.500H25" stroke="#000" strokeDasharray="3 1.500" />
              <path d="M7 14c3-9 10-9 13 1l4 5" stroke="#cc1a1a" strokeWidth="1.700" />
              <path d="M7 21c4-1 2-10 7-10s5 7 10 10" stroke="#1414c4" strokeWidth="1.700" />
            </Ic>
          </Btn>
          <Btn className="mt-px ml-[4px] h-[29px] w-[49px]">
            <svg width="16" height="13" viewBox="0 0 16 13"><path d="M1 6l3-1.500L6 8 13 1l1.500 1L6 12z" fill="#178a2a" /></svg>
            <span className="ml-[5px] text-[12.500px] font-normal tracking-[-0.500px] text-[#222]">OK</span>
          </Btn>
        </div>
        <Rule />
        <div className="flex h-[86px] shrink-0 pt-[4px] pl-[6px]">
          <div className="flex w-[30px] flex-col gap-[5px]">
            <Btn pressed><span className="pt-px text-[14px]">1</span></Btn>
            <div className="ml-px"><TwoButton /></div>
          </div>
          <div className="flex w-[221px] flex-col pl-[12px]">
            <div className="flex h-[49px] items-start pt-[4px] pl-[78px] text-[35px] leading-none tracking-[-0.500px]">5.2</div>
            <b className="pt-[1px] text-[12.500px] leading-[16px] text-[#cc1a1a]">JH69 unit 1_6</b>
            <b className="text-[12.500px] leading-[16px] text-[#cc1a1a]">climat18.TXT</b>
          </div>
          <Btn><Ic><RedX /></Ic></Btn>
        </div>
        <Rule />
        <div className="h-px shrink-0" />
        <DataRow h="h-[15px]" label="Adjusted Cooling" a="29.5" unit="MJ/m²" b="2711" unit2="MJ" />
        <DataRow h="h-[15px]" label="Adjusted Heating" a="70.5" unit="MJ/m²" b="6468" unit2="MJ" />
        <DataRow h="h-[14px]" label="Adjusted Total" a="100.0" unit="MJ/m²" b="9179" unit2="MJ" />
        <div className="mt-[3px] flex h-[56px] shrink-0 pl-[3px]">
          <div className="flex w-[245px] flex-col overflow-hidden border-t border-r-2 border-b-2 border-l border-t-[#777] border-r-white border-b-white border-l-[#777] bg-white">
            <div className="flex h-[38px] flex-col pt-[3px] font-['Liberation_Mono','Courier_New',monospace] text-[11.670px] whitespace-pre text-black">
              <span className="-ml-[3px] h-[16px] leading-[16px]">64  140  121  105   92   81   70</span>
              <span className="ml-[11px] h-[16px] leading-[16px]">3.5  4.0  4.5  5.0  5.5  6.0  6.5</span>
            </div>
            <div className="flex h-[15px] items-center bg-[#ececec]">
              <svg width="18" height="9"><path d="M10 1v7L6 4.500z" fill="#333" /></svg>
              <div className="ml-[69px] flex h-[14px] w-[68px] items-center justify-center gap-[2px] rounded-[1px] border border-[#999] bg-gradient-to-b from-[#f4f4f4] to-[#cfcfcf]">
                <div className="h-[7px] w-px bg-[#555]" /><div className="h-[7px] w-px bg-[#555]" /><div className="h-[7px] w-px bg-[#555]" />
              </div>
              <svg width="18" height="9" className="ml-[69px]"><path d="M8 1v7l4-3.500z" fill="#333" /></svg>
            </div>
          </div>
          <div className="flex flex-col pt-[4px] pl-[5px] text-[12px] leading-[15.500px] font-bold"><span>MJ/m²</span><span className="pl-px">Stars</span></div>
        </div>
        <div className="h-[5px] shrink-0" />
        <DataRow h="h-[14px]" label="Area Adjustment" a="0.81" unit="Area" b="91.76" unit2="m²" />
        <DataRow h="h-[14px]" label="Actual Cooling" a="36.6" unit="MJ/m²" b="3359" unit2="MJ" />
        <DataRow h="h-[13px]" label="Actual Heating" a="87.4" unit="MJ/m²" b="8015" unit2="MJ" />
        <DataRow h="h-[14px]" label="Actual Total" a="124.0" unit="MJ/m²" b="11375" unit2="MJ" />
        <div className="h-px shrink-0" />
        <Rule />
        <div className="flex h-[68px] shrink-0 items-center pl-[56px] text-[14px] tracking-[0.700px] [-webkit-text-stroke:0.4px_black]">
          <span className="pt-[2px]">House - All Zones</span>
        </div>
        <div className="h-px w-[289px] shrink-0 bg-white" />
        <Chart fit title="Monthly Cooling Energy" tone="blue" values={[12.6, 10.3, 5.8, 1.6, 0.15, 0, 0, 0, 0.3, 1.4, 2, 3.3]} />
        <Chart title="Monthly Heating Energy" tone="red" values={[0, 0, 0.3, 3, 7.9, 18.8, 21.7, 19, 11.5, 3.5, 2.4, 0.3]} />
      </div>
    </div>
  );
}

export default function App() {
  return (
    <div className="relative flex h-[936px] w-[1659px] flex-col overflow-hidden bg-white font-['Liberation_Sans',Arial,sans-serif] text-black">
      <svg width="0" height="0" className="absolute">
        <defs>
          <linearGradient id="docg" x1="0" y1="0" x2="1" y2="1">
            <stop offset="0" stopColor="#f4faff" />
            <stop offset="1" stopColor="#94bfee" />
          </linearGradient>
        </defs>
      </svg>
      <Toolbar />
      <div className="flex flex-1">
        <Sidebar />
        <div className="flex flex-col">
          <TopRuler />
          <div className="flex">
            <LeftRuler />
            <Plan />
          </div>
        </div>
      </div>
      <Analysis />
    </div>
  );
}
